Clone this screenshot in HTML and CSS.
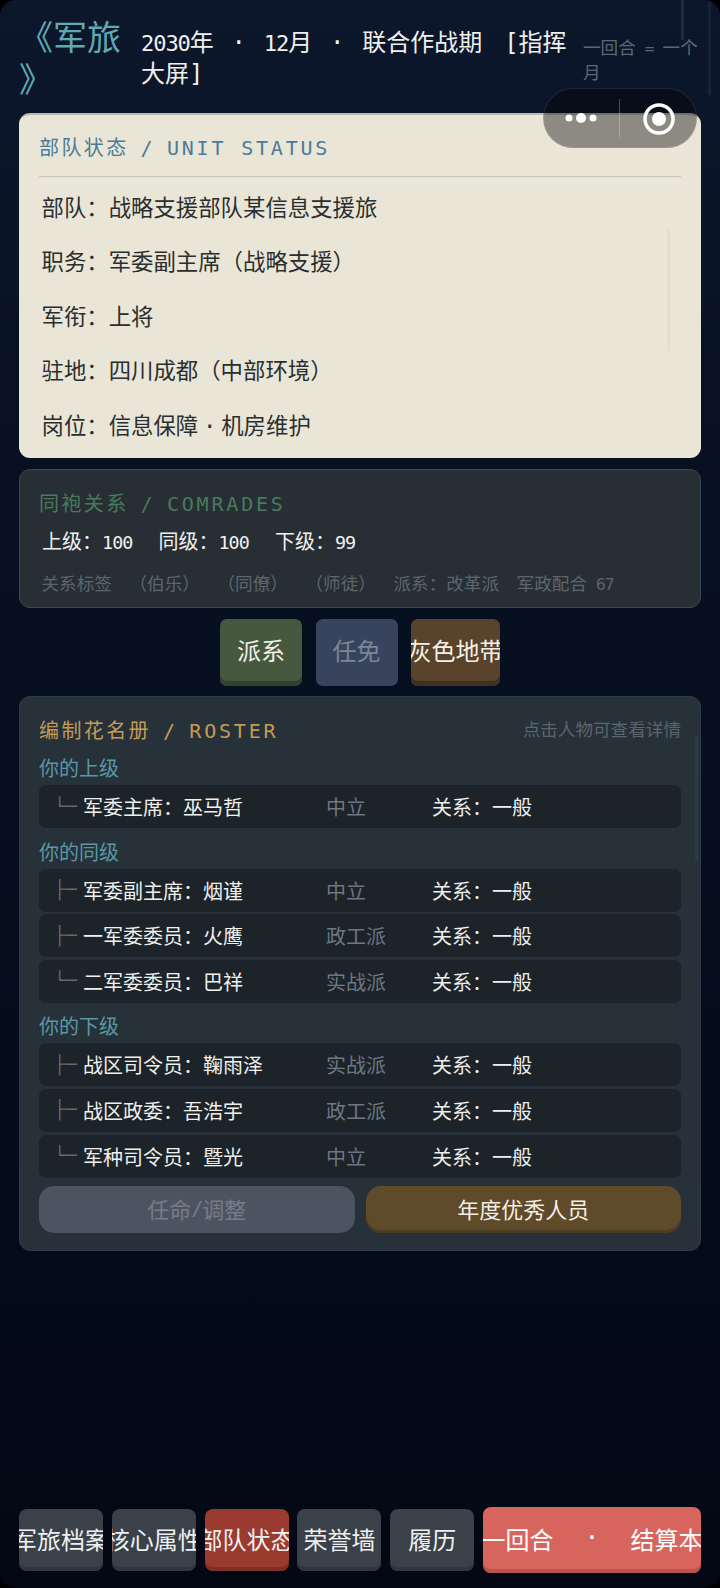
FILE: index.html
```html
<!DOCTYPE html>
<html lang="zh-CN">
   <head>
      <meta charset="UTF-8" />
      <meta name="viewport" content="width=device-width, initial-scale=1" />
      <title>军旅</title>
      <link rel="stylesheet" href="styles.css">
   </head>
   <body>
      <div class="page">
         <div class="track track-a"></div>
         <div class="track track-b"></div>
         <header class="topbar">
            <h1 class="game-title">《军旅<br>》</h1>
            <div class="game-date"><span class="num">2030</span>年<span class="sep">·</span><span class="num">12</span>月<span class="sep">·</span>联合作战期<span class="sp"></span>[指挥大屏]</div>
            <div class="game-hint">一回合<span class="num"> = </span>一个月</div>
         </header>

         <div class="capsule">
            <svg class="capsule-more" width="34" height="14" viewBox="0 0 34 14"><circle cx="5" cy="7" r="3.5" fill="#fff"/><circle cx="17" cy="7" r="5" fill="#fff"/><circle cx="29" cy="7" r="3.5" fill="#fff"/></svg>
            <span class="capsule-line"></span>
            <svg class="capsule-close" width="34" height="34" viewBox="0 0 34 34"><circle cx="17" cy="17" r="14" fill="none" stroke="#fff" stroke-width="3.5"/><circle cx="17" cy="17" r="7" fill="#fff"/></svg>
         </div>

         <section class="card card-status">
            <h2 class="card-title title-status">部队状态 / <span class="latin">UNIT STATUS</span></h2>
            <div class="status-list">
               <div class="status-row">部队：战略支援部队某信息支援旅</div>
               <div class="status-row">职务：军委副主席（战略支援）</div>
               <div class="status-row">军衔：上将</div>
               <div class="status-row">驻地：四川成都（中部环境）</div>
               <div class="status-row">岗位：信息保障<span class="dot">·</span>机房维护</div>
            </div>
            <div class="status-scroll"></div>
         </section>

         <section class="card card-comrades">
            <h2 class="card-title title-comrades">同袍关系 / <span class="latin">COMRADES</span></h2>
            <div class="rel-scores">
               <span>上级：<span class="num">100</span></span>
               <span>同级：<span class="num">100</span></span>
               <span>下级：<span class="num">99</span></span>
            </div>
            <div class="rel-tags">
               <span>关系标签</span>
               <span>（伯乐）</span>
               <span>（同僚）</span>
               <span>（师徒）</span>
               <span>派系：改革派</span>
               <span>军政配合<span class="num"> 67</span></span>
            </div>
         </section>

         <div class="action-row">
            <button class="action-btn btn-green">派系</button>
            <button class="action-btn btn-blue">任免</button>
            <button class="action-btn btn-brown">灰色地带</button>
         </div>

         <section class="card card-roster">
            <div class="roster-head">
               <h2 class="card-title title-roster">编制花名册 / <span class="latin">ROSTER</span></h2>
               <span class="roster-hint">点击人物可查看详情</span>
            </div>

            <h3 class="roster-group">你的上级</h3>
            <div class="roster-row"><span class="tree">└─</span><span class="who">军委主席：巫马哲</span><span class="faction">中立</span><span class="rel">关系：一般</span></div>

            <h3 class="roster-group">你的同级</h3>
            <div class="roster-row"><span class="tree">├─</span><span class="who">军委副主席：烟谨</span><span class="faction">中立</span><span class="rel">关系：一般</span></div>
            <div class="roster-row"><span class="tree">├─</span><span class="who">一军委委员：火鹰</span><span class="faction">政工派</span><span class="rel">关系：一般</span></div>
            <div class="roster-row"><span class="tree">└─</span><span class="who">二军委委员：巴祥</span><span class="faction">实战派</span><span class="rel">关系：一般</span></div>

            <h3 class="roster-group">你的下级</h3>
            <div class="roster-row"><span class="tree">├─</span><span class="who">战区司令员：鞠雨泽</span><span class="faction">实战派</span><span class="rel">关系：一般</span></div>
            <div class="roster-row"><span class="tree">├─</span><span class="who">战区政委：吾浩宇</span><span class="faction">政工派</span><span class="rel">关系：一般</span></div>
            <div class="roster-row"><span class="tree">└─</span><span class="who">军种司令员：暨光</span><span class="faction">中立</span><span class="rel">关系：一般</span></div>

            <div class="roster-actions">
               <button class="roster-btn btn-grey">任命<span class="num">/</span>调整</button>
               <button class="roster-btn btn-gold">年度优秀人员</button>
            </div>
            <div class="roster-scroll"></div>
         </section>

         <nav class="bottom-nav">
            <button class="nav-btn">军旅档案</button>
            <button class="nav-btn">核心属性</button>
            <button class="nav-btn nav-active">部队状态</button>
            <button class="nav-btn">荣誉墙</button>
            <button class="nav-btn">履历</button>
            <button class="nav-btn nav-next">下一回合<span class="sep-next">·</span>结算本月</button>
         </nav>
      </div>
   </body>
</html>
```

FILE: styles.css
```css
* {
box-sizing: border-box;
}
html, body {
margin: 0;
padding: 0;
background: #000;
}
body {
font-family: 'DejaVu Sans Mono', 'Noto Sans CJK SC', monospace;
color: #eee;
}
.page {
position: relative;
display: flex;
flex-direction: column;
width: 720px;
height: 1588px;
padding: 0 19px 15px;
border-radius: 16px;
overflow: hidden;
background: linear-gradient(180deg, #0d172c 0%, #071122 30%, #040b1b 75%, #030814 100%);
}
/* latin in the original font is half an em wide */
.num {
font-size: 0.92em;
letter-spacing: -0.05em;
white-space: pre;
}
.track {
position: absolute;
top: 0;
background: #1a2c3f;
}
.track-a {
left: 681px;
width: 3px;
height: 40px;
}
.track-b {
left: 708px;
width: 3px;
height: 95px;
background: #14233a;
}

/* header */
.topbar {
display: flex;
align-items: flex-start;
height: 113px;
}
.game-title {
flex: 0 0 122px;
margin: 17px 0 0;
font-size: 34px;
font-weight: 400;
line-height: 42px;
color: #5fa8b4;
white-space: nowrap;
}
.game-date {
flex: 0 0 442px;
margin-top: 28px;
padding-right: 12px;
font-size: 24px;
line-height: 31px;
color: #f0f0ec;
}
.sep {
display: inline-block;
width: 50px;
text-align: center;
}
.sp {
display: inline-block;
width: 22px;
}
.game-hint {
flex: 0 0 120px;
margin-top: 36px;
font-size: 17.6px;
line-height: 24px;
color: #5b6778;
}

/* wechat capsule */
.capsule {
position: absolute;
left: 543px;
top: 88px;
z-index: 5;
display: flex;
align-items: center;
width: 154px;
height: 60px;
padding: 0 0 0 20px;
border: 1px solid rgba(255, 255, 255, 0.1);
border-radius: 30px;
background: rgba(0, 0, 0, 0.4);
}
.capsule-more {
flex: none;
}
.capsule-line {
width: 1px;
height: 38px;
margin-left: 21px;
background: rgba(255, 255, 255, 0.25);
}
.capsule-close {
flex: none;
margin: 2px 0 0 22px;
}

/* cards */
.card {
position: relative;
border-radius: 11px;
}
.card-title {
margin: 0;
font-size: 20px;
font-weight: 400;
letter-spacing: 2.4px;
word-spacing: -2.5px;
line-height: 28px;
}
.latin {
letter-spacing: 2.8px;
word-spacing: 0;
}
.card-status {
height: 345px;
padding: 19px 20px 0;
background: #e9e6d8;
border-top: 2px solid #b9bbb4;
}
.title-status {
padding-bottom: 14px;
color: #4c7a98;
border-bottom: 1px solid #c3c6bd;
}
.status-list {
padding: 4px 0 0 2.5px;
}
.status-row {
height: 54.4px;
font-size: 22.4px;
line-height: 54.4px;
color: #2b2e2f;
}
.dot {
display: inline-block;
width: 23px;
text-align: center;
}
.status-scroll {
position: absolute;
left: 648px;
top: 114px;
width: 3px;
height: 122px;
background: #e0e0d2;
}
.card-comrades {
height: 139px;
margin-top: 11px;
padding: 20px 19px 0;
background: #272f35;
border: 1px solid #3a4a54;
}
.title-comrades {
color: #4a7a5e;
}
.rel-scores {
display: flex;
gap: 26px;
margin: 9px 0 0 3px;
font-size: 20px;
line-height: 30px;
color: #f2f2f0;
}
.rel-tags {
display: flex;
gap: 17.6px;
margin: 12px 0 0 2.5px;
font-size: 17.6px;
line-height: 28px;
color: #5c666c;
white-space: nowrap;
}

/* middle buttons */
.action-row {
display: flex;
justify-content: center;
gap: 13.5px;
margin-top: 11px;
}
.action-btn, .roster-btn, .nav-btn {
display: flex;
align-items: center;
justify-content: center;
padding: 0;
border: none;
font-family: inherit;
white-space: nowrap;
overflow: hidden;
}
.action-btn {
width: 82px;
height: 67px;
padding-bottom: 7px;
border-radius: 7px;
font-size: 24px;
}
.btn-green {
background: #46593f;
box-shadow: inset 0 -5px 0 #334030;
color: #f0f0e8;
}
.btn-blue {
background: #38435e;
color: #7c8698;
}
.btn-brown {
width: 89px;
background: #5a432b;
box-shadow: inset 0 -5px 0 #3f3022;
color: #f5f0e6;
}

/* roster */
.card-roster {
height: 555px;
margin-top: 10px;
padding: 20px 19px 0;
background: #27313a;
border: 1px solid #2f3c48;
}
.roster-head {
display: flex;
justify-content: space-between;
align-items: flex-start;
}
.title-roster {
color: #c59c52;
}
.roster-hint {
margin-top: -1px;
font-size: 17.6px;
line-height: 28px;
color: #5c656c;
}
.roster-group {
margin: 12.6px 0 3px;
height: 25px;
font-size: 20px;
font-weight: 400;
line-height: 25px;
color: #5a98a4;
}
.roster-head + .roster-group {
margin-top: 12px;
}
.roster-row {
display: flex;
align-items: center;
height: 43px;
margin-top: 2.6px;
padding-left: 15px;
border-radius: 7px;
background: #1c2329;
font-size: 20px;
white-space: nowrap;
}
.tree {
flex: 0 0 29px;
font-family: 'Liberation Mono', monospace;
font-size: 19px;
color: #5f6b75;
}
.who {
flex: 0 0 243px;
color: #f0f0ee;
}
.faction {
flex: 0 0 106px;
color: #6c7884;
}
.rel {
color: #eeeeec;
}
.roster-actions {
display: flex;
gap: 11px;
margin-top: 8px;
}
.roster-btn {
flex: 1;
height: 47px;
border-radius: 15px;
padding-bottom: 2px;
font-size: 22px;
}
.btn-grey {
background: #4c5361;
color: #777d88;
}
.btn-gold {
background: #5f4a29;
box-shadow: inset 0 -3px 0 #4d3c24;
color: #f3efe4;
}
.roster-scroll {
position: absolute;
left: 675px;
top: 38px;
width: 3px;
height: 126px;
background: #2d3a45;
}

/* bottom nav */
.bottom-nav {
display: flex;
align-items: center;
gap: 8.8px;
margin-top: auto;
}
.nav-btn {
flex: 0 0 84px;
height: 62px;
padding-bottom: 4px;
border-radius: 8px;
background: #3a4149;
box-shadow: inset 0 -4px 0 #30363d;
color: #eef0f0;
font-size: 24px;
}
.nav-active {
background: #9b3a2e;
box-shadow: inset 0 -4px 0 #7e3027;
}
.nav-next {
flex: 0 0 218px;
height: 66px;
background: #d8655d;
box-shadow: inset 0 -4px 0 #b8534d;
color: #fff;
}
.sep-next {
display: inline-block;
width: 77px;
flex: none;
text-align: center;
}
```
